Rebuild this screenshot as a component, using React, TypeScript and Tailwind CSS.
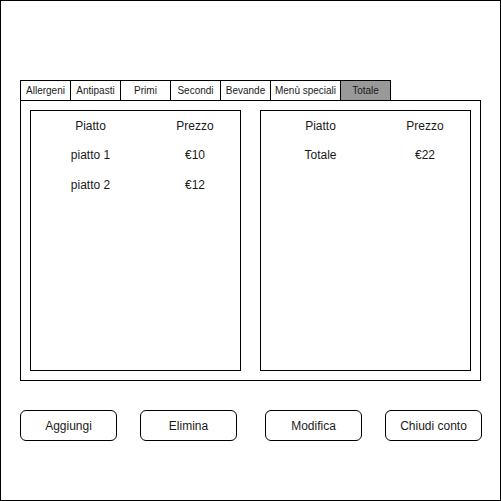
const tabs = [
  { label: 'Allergeni', w: 'w-[50px]' },
  { label: 'Antipasti', w: 'w-[50px]' },
  { label: 'Primi', w: 'w-[50px]' },
  { label: 'Secondi', w: 'w-[50px]' },
  { label: 'Bevande', w: 'w-[50px]' },
  { label: 'Menù speciali', w: 'w-[70px]' },
]

const ordine = [
  { nome: 'piatto 1', prezzo: '€10' },
  { nome: 'piatto 2', prezzo: '€12' },
]

function Tabella({ righe }: { righe: { nome: string; prezzo: string }[] }) {
  return (
    <div className="w-[211px] h-[261px] border border-black flex flex-col text-[12px] text-[#1a1a1a]">
      <div className="flex flex-row h-[29px] items-center">
        <span className="w-[119px] text-center">Piatto</span>
        <span className="w-[90px] text-center">Prezzo</span>
      </div>
      {righe.map((r) => (
        <div key={r.nome} className="flex flex-row h-[30px] items-center">
          <span className="w-[119px] text-center">{r.nome}</span>
          <span className="w-[90px] text-center">{r.prezzo}</span>
        </div>
      ))}
    </div>
  )
}

export default function App() {
  return (
    <div
      className="w-[501px] h-[501px] border border-black bg-white pt-[79px] pl-[19px]"
      style={{ fontFamily: '"Liberation Sans", Arial, sans-serif' }}
    >
      <div className="flex flex-row h-[20px] text-[10px] text-[#1a1a1a]">
        {tabs.map((t) => (
          <div key={t.label} className={`${t.w} border-t border-l border-black flex items-center justify-center`}>
            {t.label}
          </div>
        ))}
        <div className="w-[51px] border-t border-l border-r border-black bg-[#999999] flex items-center justify-center">
          Totale
        </div>
      </div>

      <div className="w-[461px] h-[281px] border border-black p-[9px] flex flex-row gap-[19px]">
        <Tabella righe={ordine} />
        <Tabella righe={[{ nome: 'Totale', prezzo: '€22' }]} />
      </div>

      <div className="flex flex-row mt-[29px] text-[12px] text-[#1a1a1a]">
        <button className="w-[97px] h-[31px] border border-black rounded-[6px]">Aggiungi</button>
        <button className="w-[97px] h-[31px] border border-black rounded-[6px] ml-[23px]">Elimina</button>
        <button className="w-[97px] h-[31px] border border-black rounded-[6px] ml-[28px]">Modifica</button>
        <button className="w-[97px] h-[31px] border border-black rounded-[6px] ml-[23px]">Chiudi conto</button>
      </div>
    </div>
  )
}
